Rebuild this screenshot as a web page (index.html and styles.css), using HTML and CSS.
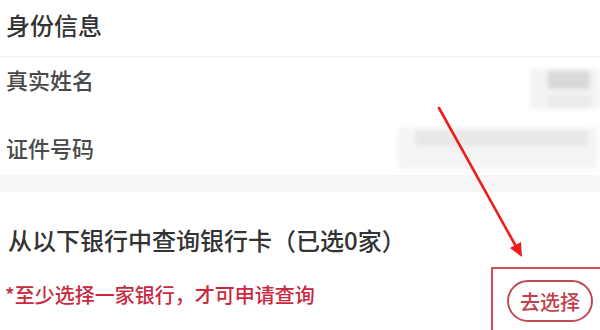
FILE: index.html
```html
<!DOCTYPE html>
<html lang="zh-CN">
<head>
<meta charset="utf-8">
<link rel="stylesheet" href="styles.css">
</head>
<body>
<div class="page">
  <section class="identity">
    <div class="title">身份信息</div>
    <div class="row row-name">
      <span class="label">真实姓名</span>
      <div class="blur blur-name"><span class="blur-dark"></span><span class="blur-light"></span></div>
    </div>
    <div class="row row-id">
      <span class="label">证件号码</span>
      <div class="blur blur-id"><span class="blur-strip"></span></div>
    </div>
  </section>
  <div class="band"></div>
  <section class="banks">
    <div class="heading">从以下银行中查询银行卡（已选0家）</div>
    <div class="hint-row">
      <span class="hint">*至少选择一家银行，才可申请查询</span>
      <button class="choose">去选择</button>
    </div>
  </section>
  <div class="mark-box"></div>
  <svg class="arrow" width="600" height="330" viewBox="0 0 600 330">
    <line x1="439" y1="108" x2="518" y2="250" stroke="#ee1c1c" stroke-width="2.6" stroke-linecap="round"/>
    <polygon points="522,257 510,248 521,242" fill="#ee1c1c"/>
  </svg>
</div>
</body>
</html>
```
FILE: styles.css
```css
* { box-sizing: border-box; }
html, body { margin: 0; padding: 0; background: #fff; }
.page {
  position: relative;
  width: 600px;
  height: 330px;
  overflow: hidden;
  font-family: "Noto Sans CJK SC", "Noto Sans", sans-serif;
  font-weight: 500;
  background: #fff;
}
.identity { display: flex; flex-direction: column; }
.title {
  height: 57px;
  padding: 9px 0 0 6px;
  font-size: 24px;
  line-height: 32px;
  color: #333;
  border-bottom: 1px solid #f1f1f1;
}
.row {
  display: flex;
  align-items: flex-start;
  justify-content: space-between;
  padding-left: 6px;
}
.row-name { height: 60px; padding-top: 7px; }
.row-id { height: 58px; padding-top: 15px; }
.label { font-size: 22px; color: #4a4a4a; line-height: 30px; }
.blur { position: relative; display: flex; }
.blur-name {
  width: 70px; height: 40px; margin-top: 5px;
  background: #f3f3f3;
  flex-direction: column; align-items: flex-end; padding: 2px 10px 0 0;
  filter: blur(2px);
}
.blur-dark { width: 42px; height: 18px; background: #d9d9d9; }
.blur-light { width: 42px; height: 14px; background: #ebebeb; margin-top: 6px; }
.blur-id {
  width: 200px; height: 42px; margin-right: 2px; margin-top: -5px;
  background: #f5f5f5;
  padding: 3px 10px 0 17px;
  filter: blur(2px);
}
.blur-strip { flex: 1; height: 16px; background: #e8e8e8; }
.band { height: 17px; background: #f6f6f6; }
.banks { display: flex; flex-direction: column; }
.heading {
  padding: 32px 0 0 8px;
  font-size: 24px;
  line-height: 32px;
  color: #333;
}
.hint-row {
  display: flex;
  align-items: flex-start;
  justify-content: space-between;
  padding: 24px 7px 0 5px;
}
.hint { font-size: 20px; color: #c9283e; line-height: 28px; margin-top: 1px; }
.choose {
  width: 86px; height: 42px;
  border: 2px solid #bf4a55;
  border-radius: 21px;
  background: #fff;
  color: #c0404c;
  font-family: inherit;
  font-weight: 500;
  font-size: 20px;
  padding: 0;
}
.mark-box {
  position: absolute;
  left: 491px; top: 267px;
  width: 120px; height: 80px;
  border: 2px solid #d94a52;
}
.arrow { position: absolute; left: 0; top: 0; pointer-events: none; }
```
